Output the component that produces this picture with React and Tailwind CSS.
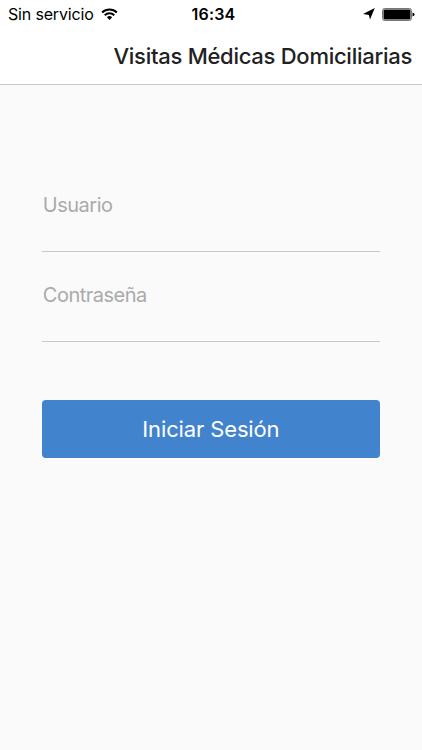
function StatusBar() {
  return (
    <div className="grid h-7 grid-cols-[1fr_auto_1fr] items-center pr-[7px] pl-2 text-black">
      <div className="flex items-center gap-[7px]">
        <span className="text-[16px] leading-7 tracking-[-0.17px] whitespace-nowrap">Sin servicio</span>
        <svg width="17" height="13" viewBox="0 0 17 13" fill="none" stroke="black" strokeWidth="1.9">
          <path d="M1.1 4.5A10.6 10.6 0 0 1 15.9 4.5" />
          <path d="M3.7 7.2A6.9 6.9 0 0 1 13.3 7.2" />
          <path d="M8.5 12 5.8 9.3A3.8 3.8 0 0 1 11.2 9.3Z" fill="black" stroke="none" />
        </svg>
      </div>
      <span className="pl-[4px] text-[16px] leading-7 font-semibold tracking-[0.2px]">16:34</span>
      <div className="flex items-center justify-end gap-[7px]">
        <svg width="12" height="12" viewBox="0 0 12 12">
          <path d="M11.8 0 7 11.6 5.9 7.1 0 6Z" fill="black" />
        </svg>
        <svg width="33" height="13" viewBox="0 0 33 13">
          <rect x=".5" y=".5" width="29" height="12" rx="2" fill="white" stroke="#777" />
          <rect x="1.5" y="1.5" width="27" height="10" rx="1" fill="black" />
          <path d="M30.5 4.4Q32.6 4.8 32.6 6.5T30.5 8.6Z" fill="black" />
        </svg>
      </div>
    </div>
  );
}

function Field({ label, type }) {
  return (
    <input
      type={type}
      placeholder={label}
      aria-label={label}
      className="block h-[69px] w-full border-b-[1.5px] border-[#c8c8c8] bg-transparent pb-[25px] pl-[0.5px] text-[20px] tracking-[-0.5px] outline-none placeholder:text-[#aaaaaa]"
    />
  );
}

export default function App() {
  return (
    <div className="flex h-[750px] w-[422px] flex-col bg-[#fafafa] font-['Inter',sans-serif]">
      <header className="h-[85px] border-b border-[#c8c8c8] bg-white">
        <StatusBar />
        <h1 className="pr-[10px] text-right text-[22px] leading-[56px] font-medium tracking-[-0.27px] whitespace-nowrap text-[#212121]">
          Visitas Médicas Domiciliarias
        </h1>
      </header>
      <main className="flex flex-col pt-[98px] pr-[42.5px] pl-[42.3px]">
        <div className="flex flex-col gap-[21px]">
          <Field label="Usuario" type="text" />
          <Field label="Contraseña" type="password" />
        </div>
        <button className="mt-[58px] h-[58px] rounded-[4px] bg-[#4183cd] text-[22px] tracking-[-0.13px] text-white">
          Iniciar Sesión
        </button>
      </main>
    </div>
  );
}
